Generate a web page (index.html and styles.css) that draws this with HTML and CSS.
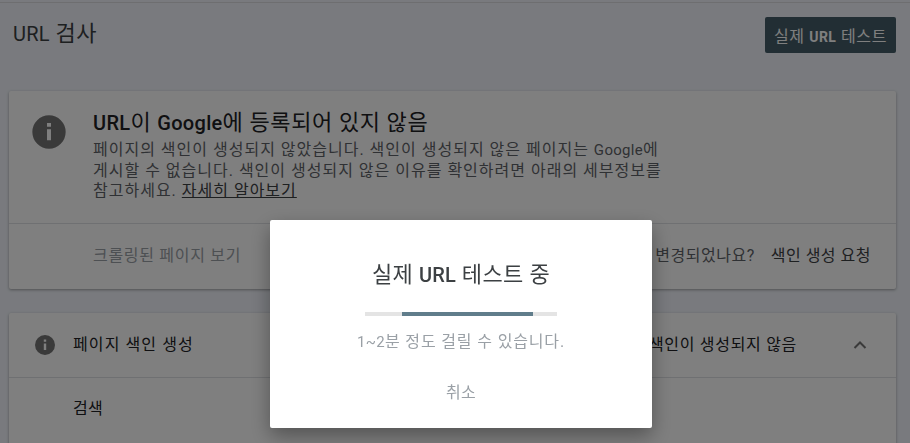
FILE: index.html
```html
<!DOCTYPE html>
<html lang="ko">
<head>
<meta charset="utf-8">
<title>URL 검사</title>
<link rel="stylesheet" href="styles.css">
</head>
<body>
<div class="page">
  <div class="topline"></div>
  <header class="head">
    <h1 class="title"><span class="lat">URL</span> 검사</h1>
    <button class="live-btn">실제 <b class="lat">URL</b> 테스트</button>
  </header>
  <section class="card status">
    <div class="status-main">
      <svg class="icon-big" viewBox="0 0 24 24"><path d="M12 2a10 10 0 1 0 0 20 10 10 0 0 0 0-20zm1.2 15h-2.4v-6.6h2.4zm0-8.2h-2.4V6.6h2.4z"/></svg>
      <div class="status-text">
        <h2 class="status-title"><b class="lat">URL</b>이 <b class="lat">Google</b>에 등록되어 있지 않음</h2>
        <p class="status-desc">페이지의 색인이 생성되지 않았습니다. 색인이 생성되지 않은 페이지는 <span class="lat">Google</span>에<br>게시할 수 없습니다. 색인이 생성되지 않은 이유를 확인하려면 아래의 세부정보를<br>참고하세요. <a class="learn">자세히 알아보기</a></p>
      </div>
    </div>
    <div class="status-actions">
      <span class="crawled">크롤링된 페이지 보기</span>
      <span class="changed">페이지가 변경되었나요?</span>
      <span class="request">색인 생성 요청</span>
    </div>
  </section>
  <section class="card detail">
    <div class="detail-head">
      <svg class="icon-small" viewBox="0 0 24 24"><path d="M12 2a10 10 0 1 0 0 20 10 10 0 0 0 0-20zm1.2 15h-2.4v-6.6h2.4zm0-8.2h-2.4V6.6h2.4z"/></svg>
      <span class="detail-name">페이지 색인 생성</span>
      <span class="detail-state">페이지 색인이 생성되지 않음</span>
      <svg class="chevron" viewBox="0 0 24 24"><path d="M6.5 15 12 9.5l5.5 5.5" fill="none" stroke-width="2"/></svg>
    </div>
    <div class="detail-row">검색</div>
  </section>
</div>
<div class="overlay"></div>
<div class="dialog" role="dialog">
  <h3 class="dialog-title">실제 <b class="lat">URL</b> 테스트 중</h3>
  <div class="progress"><div class="progress-bar"></div></div>
  <p class="dialog-note"><span class="lat">1~2</span>분 정도 걸릴 수 있습니다.</p>
  <span class="cancel">취소</span>
</div>
</body>
</html>
```
FILE: styles.css
```css
* { box-sizing: border-box; }
html, body { margin: 0; height: 100%; overflow: hidden; }
body {
  background: #f2f5fc;
  font-family: Roboto, "Noto Sans CJK KR", sans-serif;
  color: #202124;
}
.page {
  height: 443px;
  overflow: hidden;
  padding: 2px 14px 0 9px;
}
.topline {
  height: 1px;
  margin: 0 -14px 0 -9px;
  background: #dcdde0;
}
.head {
  display: flex;
  justify-content: space-between;
  align-items: flex-start;
  height: 88px;
  padding-top: 14px;
}
.title {
  margin: 1px 0 0 4px;
  font-size: 22px;
  line-height: 32px;
  font-weight: 400;
  color: #3c4043;
  letter-spacing: .4px;
}
.lat { font-size: 20px; letter-spacing: .2px; }
.live-btn {
  width: 131px;
  height: 36px;
  border: 0;
  border-radius: 2px;
  background: #455d68;
  color: #fff;
  font: inherit;
  font-size: 16px;
  letter-spacing: .65px;
  padding: 0;
}
.live-btn .lat { font-size: 14px; font-weight: 700; letter-spacing: .4px; }
.card {
  background: #fff;
  border-radius: 2px;
  box-shadow: 0 1px 3px rgba(0,0,0,.35);
}
.status { height: 198px; margin-bottom: 24px; }
.status-main {
  display: flex;
  height: 133px;
  padding: 21px 0 0 23px;
  border-bottom: 1px solid #dfe1e5;
}
.icon-big { width: 40px; height: 40px; margin: 0 0 0 -3px; fill: #757575; flex: none; }
.status-text { margin-left: 24px; margin-top: -3px; }
.status-title {
  margin: 0;
  font-size: 22px;
  line-height: 28px;
  font-weight: 400;
  letter-spacing: .6px;
  color: #202124;
}
.status-title .lat { font-weight: 500; letter-spacing: .3px; }
.status-desc {
  margin: 3px 0 0;
  font-size: 16px;
  line-height: 20.5px;
  color: #5f6368;
  letter-spacing: 1px;
  white-space: nowrap;
}
.status-desc .lat { font-size: 15px; letter-spacing: .3px; }
.learn { color: #3c4043; text-decoration: underline; }
.status-actions {
  display: flex;
  align-items: center;
  height: 60px;
  padding: 0 25px 0 84px;
  font-size: 16px;
  letter-spacing: .5px;
}
.crawled { color: #9aa0a6; letter-spacing: .7px; }
.changed { margin-left: auto; color: #5f6368; }
.request { margin-left: 16px; color: #3c4043; }
.detail { height: 200px; }
.detail-head {
  display: flex;
  align-items: center;
  height: 65px;
  padding: 0 24px;
  border-bottom: 1px solid #dfe1e5;
  font-size: 16px;
  letter-spacing: .7px;
}
.icon-small { width: 24px; height: 24px; fill: #757575; flex: none; }
.detail-name { margin-left: 16px; position: relative; top: -2px; letter-spacing: 1.1px; }
.detail-state { margin-left: auto; margin-right: 51px; position: relative; top: -2px; }
.chevron { width: 24px; height: 24px; stroke: #757575; flex: none; }
.detail-row { padding: 21px 0 0 64px; font-size: 16px; line-height: 20px; letter-spacing: .2px; }
.overlay {
  position: fixed;
  inset: 0;
  background: rgba(0,0,0,.5);
}
.dialog {
  position: fixed;
  left: 270px;
  top: 220px;
  width: 382px;
  height: 208px;
  background: #fff;
  border-radius: 2px;
  box-shadow: 0 8px 20px rgba(0,0,0,.35);
  display: flex;
  flex-direction: column;
  align-items: center;
}
.dialog-title {
  margin: 40px 0 0;
  font-size: 22px;
  line-height: 30px;
  font-weight: 400;
  letter-spacing: .35px;
  color: #3c4043;
}
.dialog-title .lat { font-weight: 500; }
.progress {
  width: 192px;
  height: 4px;
  margin-top: 22px;
  background: #e4e4e4;
  padding-left: 37px;
}
.progress-bar { width: 131px; height: 4px; background: #607d8b; }
.dialog-note {
  margin: 16px 0 0;
  font-size: 16px;
  line-height: 20px;
  color: #9aa0a6;
  letter-spacing: .85px;
}
.dialog-note .lat { font-size: 15px; letter-spacing: .3px; }
.cancel {
  margin-top: 31px;
  font-size: 16px;
  line-height: 20px;
  letter-spacing: .2px;
  color: #9aa0a6;
}
```
